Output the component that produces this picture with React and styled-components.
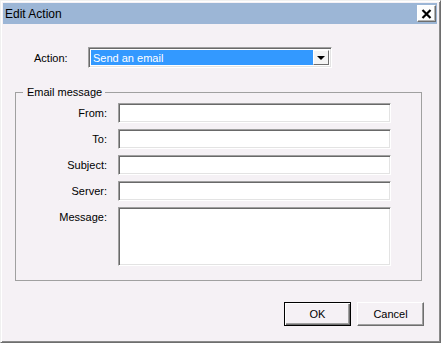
import { Fragment } from 'react';
import styled, { createGlobalStyle } from 'styled-components';

const Global = createGlobalStyle`
    html, body {
        margin: 0;
        padding: 0;
        background: #f5f1f5;
    }
    body {
        font-family: "Liberation Sans", Arial, sans-serif;
        font-size: 11px;
        color: #000;
    }
`;

const Window = styled.div`
    width: 441px;
    height: 343px;
    box-sizing: border-box;
    display: flex;
    flex-direction: column;
    background: #f5f1f5;
    border: 1px solid;
    border-color: #f0f0f0 #6e6e6e #6e6e6e #f0f0f0;
    box-shadow: inset 1px 1px 0 #fff, inset -1px -1px 0 #8a8a8a;
    padding: 2px 3px 2px 2px;
`;

const TitleBar = styled.div`
    height: 21px;
    display: flex;
    align-items: center;
    justify-content: space-between;
    background: #9cb6d6;
    padding: 0 1px 0 2px;
`;

const Title = styled.span`
    font-size: 12px;
    color: #000;
    line-height: 1;
`;

const CloseButton = styled.button`
    width: 19px;
    height: 17px;
    padding: 0;
    display: flex;
    align-items: center;
    justify-content: center;
    background: #fdfdfd;
    border: 1px solid;
    border-color: #fff #6e6e6e #6e6e6e #fff;
    box-shadow: inset -1px -1px 0 #b4b4b4;
`;

const Content = styled.div`
    flex: 1;
    display: flex;
    flex-direction: column;
    padding: 23px 13px 0 12px;
`;

const ActionRow = styled.div`
    display: grid;
    grid-template-columns: 54px 244px;
    align-items: center;
    padding-left: 19px;
`;

const Label = styled.label`
    text-align: ${p => (p.$align === 'left' ? 'left' : 'right')};
    align-self: ${p => (p.$top ? 'start' : 'center')};
    padding-top: ${p => (p.$top ? '4px' : '0')};
    white-space: nowrap;
`;

const Combo = styled.div`
    height: 21px;
    box-sizing: border-box;
    display: flex;
    align-items: stretch;
    background: #fff;
    border: 1px solid;
    border-color: #a0a0a0 #fff #fff #a0a0a0;
    box-shadow: inset 1px 1px 0 #696969, inset -1px -1px 0 #e3e3e3;
    padding: 2px;
`;

const Selected = styled.div`
    flex: 1;
    display: flex;
    align-items: center;
    background: #3399ff;
    color: #fff;
    padding-left: 2px;
`;

const DropButton = styled.div`
    width: 16px;
    box-sizing: border-box;
    display: flex;
    align-items: center;
    justify-content: center;
    background: #f4f4f4;
    border: 1px solid;
    border-color: #fff #6e6e6e #6e6e6e #fff;
`;

const Arrow = styled.span`
    width: 0;
    height: 0;
    border-left: 4px solid transparent;
    border-right: 4px solid transparent;
    border-top: 4px solid #000;
`;

const Group = styled.fieldset`
    margin: 18px 0 0;
    width: 407px;
    box-sizing: border-box;
    border: 1px solid #a0a0a0;
    padding: 5px 29px 14px 0;
    display: grid;
    grid-template-columns: 91px 273px;
    column-gap: 11px;
    row-gap: 6px;
`;

const Legend = styled.legend`
    margin-left: 7px;
    padding: 0 3px 0 4px;
    line-height: 12px;
`;

const Field = styled.div`
    height: ${p => p.$h}px;
    box-sizing: border-box;
    background: #fff;
    border: 1px solid;
    border-color: #a0a0a0 #fff #fff #a0a0a0;
    box-shadow: inset 1px 1px 0 #696969, inset -1px -1px 0 #e3e3e3;
`;

const Buttons = styled.div`
    display: flex;
    justify-content: flex-end;
    gap: 6px;
    margin-top: 21px;
`;

const Button = styled.button`
    width: 67px;
    height: 24px;
    box-sizing: border-box;
    font-family: "Liberation Sans", Arial, sans-serif;
    font-size: 11px;
    color: #000;
    background: #f5f1f5;
    padding: 0;
    border: 1px solid;
    border-color: ${p => (p.$default ? '#000' : '#fff #6e6e6e #6e6e6e #fff')};
    box-shadow: ${p => (p.$default
        ? 'inset 1px 1px 0 #fff, inset -1px -1px 0 #6e6e6e, inset -2px -2px 0 #a0a0a0'
        : 'inset -1px -1px 0 #a0a0a0')};
`;

const fields = [
    { label: 'From:', h: 20 },
    { label: 'To:', h: 20 },
    { label: 'Subject:', h: 20 },
    { label: 'Server:', h: 20 },
    { label: 'Message:', h: 59, top: true },
];

const App = () => (
    <>
        <Global />
        <Window>
            <TitleBar>
                <Title>Edit Action</Title>
                <CloseButton aria-label="Close">
                    <svg width="11" height="10" viewBox="0 0 11 10">
                        <path d="M1.5 1 L9.5 9 M9.5 1 L1.5 9" stroke="#000" strokeWidth="2.2" />
                    </svg>
                </CloseButton>
            </TitleBar>
            <Content>
                <ActionRow>
                    <Label $align="left">Action:</Label>
                    <Combo>
                        <Selected>Send an email</Selected>
                        <DropButton><Arrow /></DropButton>
                    </Combo>
                </ActionRow>
                <Group>
                    <Legend>Email message</Legend>
                    {fields.map(f => (
                        <Fragment key={f.label}>
                            <Label $top={f.top}>{f.label}</Label>
                            <Field $h={f.h} />
                        </Fragment>
                    ))}
                </Group>
                <Buttons>
                    <Button $default>OK</Button>
                    <Button>Cancel</Button>
                </Buttons>
            </Content>
        </Window>
    </>
);

export default App;
